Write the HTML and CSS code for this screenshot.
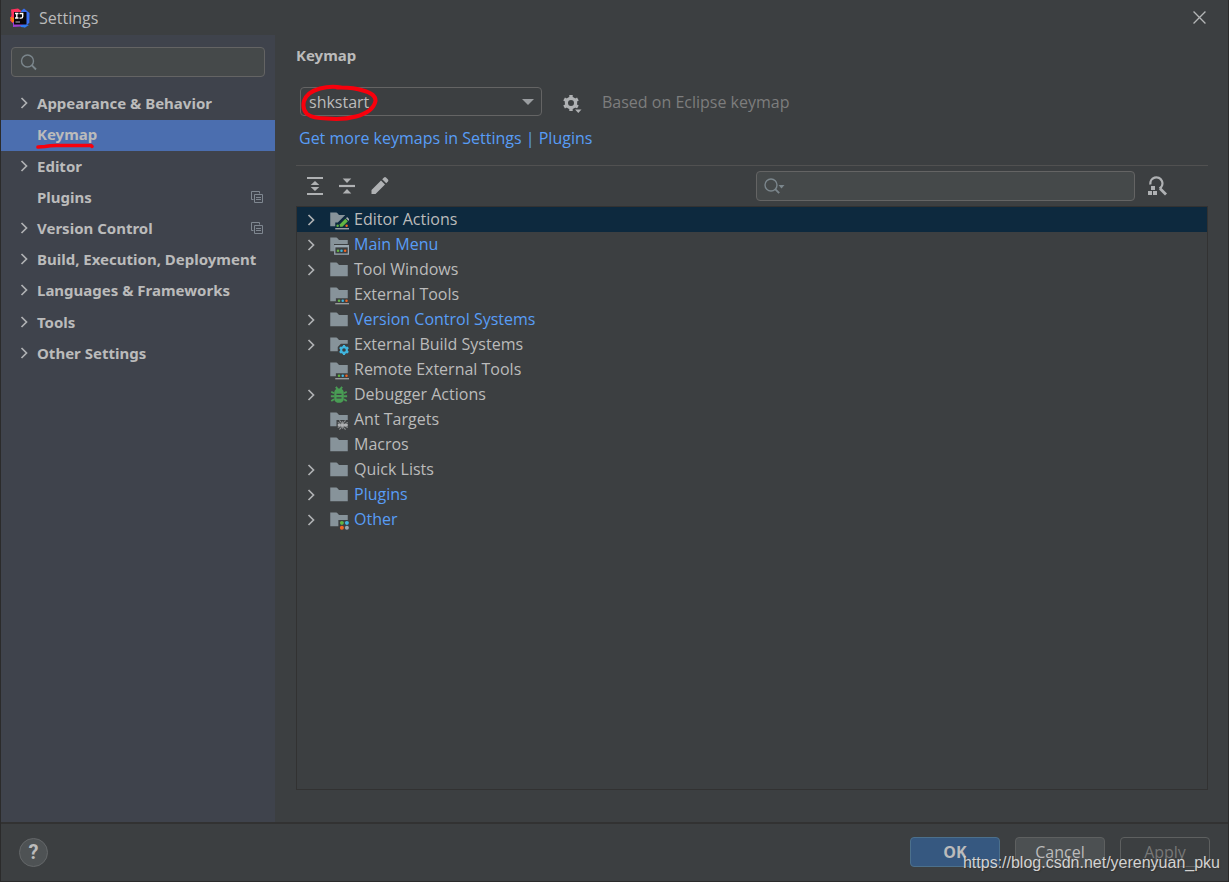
FILE: index.html
```html
<!DOCTYPE html>
<html lang="en">
<head>
<meta charset="utf-8">
<title>Settings</title>
<link rel="stylesheet" href="styles.css">
</head>
<body>
<svg class="defs" aria-hidden="true">
  <symbol id="chev" viewBox="0 0 12 12"><path d="M3.500 1l5 5-5 5" fill="none" stroke="#afb1b3" stroke-width="1.700"/></symbol>
  <symbol id="copy" viewBox="0 0 12 12"><path d="M2.500 8.500H.5V.5h8v2" fill="none" stroke="#7f8790"/><path d="M3.500 3.500h8v8h-8z" fill="none" stroke="#7f8790"/><path d="M5 6.500h5M5 8.500h5" stroke="#7f8790"/></symbol>
  <symbol id="folder" viewBox="0 0 16 16"><path d="M1 13h14V4H8L6.600 2.300A1 1 0 0 0 5.900 2H1z" fill="#87939a"/></symbol>
  <symbol id="f-edit" viewBox="0 0 16 16"><path d="M1 13h4v-3h2l6-6H8L6.600 2.300A1 1 0 0 0 5.900 2H1z" fill="#87939a"/><path d="M8.700 11.400l4.400-4.400 2 2-4.400 4.400H8.700z" fill="#62b543"/><path d="M13.600 6.500l.9-.9 2 2-.9.900z" fill="#afb1b3"/><circle cx="6.900" cy="12.600" r="1" fill="#62b543"/><circle cx="14.100" cy="12.600" r="1" fill="#f26522"/><path d="M5 15h11" stroke="#afb1b3"/></symbol>
  <symbol id="f-menu" viewBox="0 0 16 16"><path d="M1 13h3V7.200h11V4H8L6.600 2.300A1 1 0 0 0 5.900 2H1z" fill="#87939a"/><path d="M4.600 8.400h10.900v6.900H4.600z" fill="none" stroke="#9aa7b0"/><path d="M4.600 9.200h10.900" stroke="#9aa7b0" stroke-width="1.400"/><circle cx="7.200" cy="12.500" r="1" fill="#62b543"/><circle cx="10" cy="12.500" r="1" fill="#40b6e0"/><circle cx="12.900" cy="12.500" r="1" fill="#f26522"/></symbol>
  <symbol id="f-tools" viewBox="0 0 16 16"><path d="M1 13h4.500v-2.500H15V4H8L6.600 2.300A1 1 0 0 0 5.900 2H1z" fill="#87939a"/><circle cx="8" cy="12.500" r="1" fill="#62b543"/><circle cx="11" cy="12.500" r="1" fill="#40b6e0"/><circle cx="14" cy="12.500" r="1" fill="#f26522"/><path d="M5 15h11" stroke="#afb1b3" stroke-width=".9"/></symbol>
  <symbol id="f-build" viewBox="0 0 16 16"><path d="M1 13h6V9.500L9.500 7H15V4H8L6.600 2.300A1 1 0 0 0 5.900 2H1z" fill="#87939a"/><circle cx="12" cy="12" r="2.300" fill="none" stroke="#40b6e0" stroke-width="1.700"/><path d="M12 8v1.500M12 14.500V16M8.540 10l1.300.75M14.160 13.250l1.300.75M15.460 10l-1.300.75M9.840 13.250l-1.300.75" stroke="#40b6e0" stroke-width="1.700"/></symbol>
  <symbol id="f-ant" viewBox="0 0 16 16"><path d="M1 13h5V8h9V4H8L6.600 2.300A1 1 0 0 0 5.900 2H1z" fill="#87939a"/><path d="M7 12h2.500M11.500 12H15" stroke="#afb1b3" stroke-width="2.200"/><circle cx="10.700" cy="12" r="1.300" fill="#afb1b3"/><path d="M8 8.700h1l1.300 2.500M13.500 8.700h-1l-1.300 2.500M8 15.300h1l1.300-2.500M13.500 15.300h-1l-1.300-2.500M10.700 9v6M7 10l2 .8M15 10l-2 .8M7 14l2-.8M15 14l-2-.8" fill="none" stroke="#afb1b3" stroke-width=".6"/></symbol>
  <symbol id="f-other" viewBox="0 0 16 16"><path d="M1 13h6.500V8H15V4H8L6.600 2.300A1 1 0 0 0 5.900 2H1z" fill="#87939a"/><circle cx="10.300" cy="10.300" r="1.600" fill="#62b543"/><circle cx="14.300" cy="10.300" r="1.600" fill="#40b6e0"/><circle cx="10.300" cy="14.200" r="1.600" fill="#f26522"/><circle cx="14.300" cy="14.200" r="1.600" fill="#9aa7b0"/></symbol>
  <symbol id="bug" viewBox="0 0 16 16"><path d="M4.200 5.500A3.900 3.400 0 0 1 11.800 5.500V11.500A3.900 3.500 0 0 1 4.200 11.500z" fill="#499c54"/><path d="M5.500 1.500l1.500 2M10.500 1.500L9 3.500M4 6.600L1.800 5.400M12 6.600l2.200-1.200M1.500 9h3M11.500 9h3M4 11.400l-2.200 1.400M12 11.400l2.200 1.400" stroke="#499c54" stroke-width="1.500"/><path d="M6 7.500h4M6 10.300h4" stroke="#3c3f41" stroke-width="1"/></symbol>
</svg>

<div class="window">
  <header class="titlebar">
    <svg class="logo" viewBox="0 0 20 20" aria-hidden="true">
      <path d="M1 1.500L8 .5l4 3-8 13-4-4L1.500 7z" fill="#fe315d"/>
      <path d="M0 9l5 1v5l-3-1z" fill="#f97a12"/>
      <path d="M11 3l3-2.500L19.500 5l-.2 9.500L15 19.500 9 17z" fill="#3b6ff2"/>
      <path d="M3 14l13-1-5 5.500-8 .5z" fill="#9b3fd0"/>
      <path d="M10 17h9l-4 2.500-4-.5z" fill="#2d7bf4"/>
      <path d="M4 4h12.500v12.500H4z" fill="#08060c"/>
      <path d="M5 5.500h3.500M6.800 5.500v4.500M5 10h3.500M9.500 5.500h3.200v3q0 1.600-1.700 1.600H9.500" fill="none" stroke="#fff" stroke-width="1.400"/>
      <path d="M5.500 14h4.500" stroke="#bbb"/>
    </svg>
    <span class="title">Settings</span>
    <button class="close" type="button" aria-label="Close"><svg viewBox="0 0 12 12"><path d="M.5.5l11 11M11.500.5l-11 11" stroke="#b4b6b7" stroke-width="1.200"/></svg></button>
  </header>

  <div class="body">
    <aside class="sidebar">
      <label class="search">
        <svg class="lens" viewBox="0 0 20 20" aria-hidden="true"><circle cx="8.500" cy="9" r="6" fill="none" stroke="#7b868c" stroke-width="1.400"/><path d="M12.700 13.200l4.300 4.300" stroke="#7b868c" stroke-width="1.900"/></svg>
        <input type="text" aria-label="Search settings">
      </label>
      <nav class="nav">
        <a href="#"><svg class="chev"><use href="#chev"/></svg><span>Appearance &amp; Behavior</span></a>
        <a href="#" class="current" aria-current="page"><i class="chev"></i><span class="marked">Keymap<svg class="underline" viewBox="0 0 60 6" aria-hidden="true"><path d="M2 4l7-.5Q14 2.500 20 2.500H55l1 .8" fill="none" stroke="#f8000c" stroke-width="3.600" stroke-linecap="round"/></svg></span></a>
        <a href="#"><svg class="chev"><use href="#chev"/></svg><span>Editor</span></a>
        <a href="#"><i class="chev"></i><span>Plugins</span><svg class="copy"><use href="#copy"/></svg></a>
        <a href="#"><svg class="chev"><use href="#chev"/></svg><span>Version Control</span><svg class="copy"><use href="#copy"/></svg></a>
        <a href="#"><svg class="chev"><use href="#chev"/></svg><span>Build, Execution, Deployment</span></a>
        <a href="#"><svg class="chev"><use href="#chev"/></svg><span>Languages &amp; Frameworks</span></a>
        <a href="#"><svg class="chev"><use href="#chev"/></svg><span>Tools</span></a>
        <a href="#"><svg class="chev"><use href="#chev"/></svg><span>Other Settings</span></a>
      </nav>
    </aside>

    <main class="main">
      <h1>Keymap</h1>
      <div class="scheme">
        <div class="combo">
          <select aria-label="Keymap scheme"><option>shkstart</option></select>
          <svg class="arrow" viewBox="0 0 12 6" aria-hidden="true"><path d="M0 0h12L6 6z" fill="#9a9da0"/></svg>
          <svg class="ring" viewBox="0 0 78 38" aria-hidden="true"><path d="M41 3.500Q31 1.500 20 4.500 7 8 4 17 2 25 7 30 13 34.500 27 34.500 43 36 56 32.500 73 28 75.500 17 76 10 63 6.500 53 3 37 3.500" fill="none" stroke="#f8000c" stroke-width="4" stroke-linecap="round"/></svg>
        </div>
        <button class="icon gear" type="button" aria-label="Scheme actions"><svg viewBox="0 0 20 20"><circle cx="9" cy="9" r="4.600" fill="none" stroke="#afb1b3" stroke-width="3.200"/><path d="M9 1v3M9 14v3M2.100 5l2.600 1.500M13.300 11.500l2.600 1.500M15.900 5l-2.600 1.500M4.700 11.500L2.100 13" stroke="#afb1b3" stroke-width="3.400"/><path d="M11.500 14.500h9l-4.300 6z" fill="#3c3f41"/><path d="M13 15.500h6.500l-3.200 3.500z" fill="#afb1b3"/></svg></button>
        <span class="based">Based on Eclipse keymap</span>
      </div>
      <a class="more" href="#">Get more keymaps in Settings | Plugins</a>

      <div class="toolbar">
        <button class="icon" type="button" aria-label="Expand all"><svg viewBox="0 0 20 20"><path d="M2 2h16M2 18h16" stroke="#afb1b3" stroke-width="2.200"/><path d="M10 5l4.300 4H5.700zM10 15l4.300-4H5.700z" fill="#afb1b3"/></svg></button>
        <button class="icon" type="button" aria-label="Collapse all"><svg viewBox="0 0 20 20"><path d="M2 10h16" stroke="#afb1b3" stroke-width="2.200"/><path d="M10 7l4.300-4.500H5.700zM10 13l4.300 4.500H5.700z" fill="#afb1b3"/></svg></button>
        <button class="icon" type="button" aria-label="Edit shortcut"><svg viewBox="0 0 20 20"><path d="M2.500 18v-4L12 4.500l4 4L6.500 18zM13.200 3.300L15 1.500q1-.8 2 0l2 2q.8 1 0 2l-1.800 1.800z" fill="#afb1b3"/></svg></button>
        <label class="search filter">
          <svg class="lens wide" viewBox="0 0 24 20" aria-hidden="true"><circle cx="7" cy="9" r="6" fill="none" stroke="#7b868c" stroke-width="1.400"/><path d="M11.200 13.200l4 4" stroke="#7b868c" stroke-width="1.900"/><path d="M14.500 9h6l-3 3.500z" fill="#7b868c"/></svg>
          <input type="text" aria-label="Filter actions">
        </label>
        <button class="icon" type="button" aria-label="Find by shortcut"><svg viewBox="0 0 20 20"><path d="M3.500 8.500A6 6 0 1 1 12.500 12.500" fill="none" stroke="#afb1b3" stroke-width="2.300"/><path d="M13 12.500l6 6" stroke="#afb1b3" stroke-width="2.800"/><path d="M4 10h4v4H4zM1 15h4v4H1zM6 15h4v4H6z" fill="#afb1b3"/></svg></button>
      </div>

      <ul class="tree">
        <li class="selected"><svg class="chev"><use href="#chev"/></svg><svg class="kind"><use href="#f-edit"/></svg><span>Editor Actions</span></li>
        <li class="changed"><svg class="chev"><use href="#chev"/></svg><svg class="kind"><use href="#f-menu"/></svg><span>Main Menu</span></li>
        <li><svg class="chev"><use href="#chev"/></svg><svg class="kind"><use href="#folder"/></svg><span>Tool Windows</span></li>
        <li><i class="chev"></i><svg class="kind"><use href="#f-tools"/></svg><span>External Tools</span></li>
        <li class="changed"><svg class="chev"><use href="#chev"/></svg><svg class="kind"><use href="#folder"/></svg><span>Version Control Systems</span></li>
        <li><svg class="chev"><use href="#chev"/></svg><svg class="kind"><use href="#f-build"/></svg><span>External Build Systems</span></li>
        <li><i class="chev"></i><svg class="kind"><use href="#f-tools"/></svg><span>Remote External Tools</span></li>
        <li><svg class="chev"><use href="#chev"/></svg><svg class="kind"><use href="#bug"/></svg><span>Debugger Actions</span></li>
        <li><i class="chev"></i><svg class="kind"><use href="#f-ant"/></svg><span>Ant Targets</span></li>
        <li><i class="chev"></i><svg class="kind"><use href="#folder"/></svg><span>Macros</span></li>
        <li><svg class="chev"><use href="#chev"/></svg><svg class="kind"><use href="#folder"/></svg><span>Quick Lists</span></li>
        <li class="changed"><svg class="chev"><use href="#chev"/></svg><svg class="kind"><use href="#folder"/></svg><span>Plugins</span></li>
        <li class="changed"><svg class="chev"><use href="#chev"/></svg><svg class="kind"><use href="#f-other"/></svg><span>Other</span></li>
      </ul>
    </main>
  </div>

  <footer class="footer">
    <button class="help" type="button" aria-label="Help">?</button>
    <div class="actions">
      <button class="btn primary" type="button">OK</button>
      <button class="btn" type="button">Cancel</button>
      <button class="btn off" type="button" disabled>Apply</button>
    </div>
    <span class="watermark">https://blog.csdn.net/yerenyuan_pku</span>
  </footer>
</div>
</body>
</html>
```
FILE: styles.css
```css
* { box-sizing: border-box; }

body {
  margin: 0;
  background: #3c3f41;
  color: #bbbbbb;
  font: 16px/24px "Open Sans", "Noto Sans", sans-serif;
}

.defs { display: none; }
svg { display: block; flex: none; }
button, input, select { font: inherit; color: inherit; }
a { color: inherit; text-decoration: none; }

.window {
  display: flex;
  flex-direction: column;
  min-height: 100vh;
  border: solid #2b2b2b;
  border-width: 0 1px 1px;
}

.titlebar {
  display: flex;
  align-items: center;
  gap: 9px;
  height: 35px;
  padding: 0 22px 0 9px;
}
.logo { width: 20px; height: 20px; }
.title { flex: 1; }
.close { padding: 0; border: 0; background: none; }
.close svg { width: 13px; height: 13px; }

.body { display: flex; flex: 1; }

.sidebar {
  width: 274px;
  padding-top: 12px;
  background: #3f434c;
}
.search {
  display: flex;
  align-items: center;
  height: 30px;
  padding: 0 7px;
  border: 1px solid #646464;
  border-radius: 4px;
  background: #45494a;
}
.search input {
  flex: 1;
  min-width: 0;
  border: 0;
  outline: 0;
  background: none;
}
.sidebar .search { margin: 0 10px 12px; }
.lens { width: 20px; height: 20px; }
.lens.wide { width: 24px; }

.nav {
  display: grid;
  min-height: 281px;
  font: bold 15px/24px "Noto Sans", "Open Sans", sans-serif;
}
.nav a {
  display: flex;
  align-items: center;
  padding: 0 12px 3px 17px;
}
.nav .current { background: #4b6eaf; }
.nav .chev { margin-right: 7px; }
.chev { width: 12px; height: 12px; }
.copy { width: 12px; height: 12px; margin-left: auto; }
.marked { position: relative; }
.underline {
  position: absolute;
  left: -1px;
  bottom: -3px;
  width: 60px;
  height: 6px;
}

.main {
  display: flex;
  flex: 1;
  flex-direction: column;
  padding: 8px 20px 32px 21px;
}
h1 { margin: 0; font: bold 15px/24px "Noto Sans", "Open Sans", sans-serif; }

.scheme {
  display: flex;
  align-items: center;
  margin: 20px 0 10px 4px;
}
.combo { position: relative; width: 242px; }
.combo select {
  display: block;
  width: 100%;
  height: 29px;
  padding: 0 8px;
  appearance: none;
  border: 1px solid #646464;
  border-radius: 4px;
  background: #3c3f41;
}
.arrow {
  position: absolute;
  top: 12px;
  right: 8px;
  width: 12px;
  height: 6px;
}
.ring {
  position: absolute;
  top: -3px;
  left: 0;
  width: 78px;
  height: 38px;
}
.icon { padding: 0; border: 0; background: none; }
.icon svg { width: 20px; height: 20px; }
.gear { margin: 4px 20px 0; }
.based { color: #7d7d7d; }
.more {
  align-self: flex-start;
  margin: 0 0 15px 3px;
  color: #589df6;
}

.toolbar {
  display: flex;
  align-items: center;
  gap: 12px;
  height: 41px;
  padding: 0 41px 0 9px;
  border-top: 1px solid #515151;
}
.filter { width: 379px; margin-left: auto; }

.tree {
  flex: 1;
  margin: 0;
  padding: 0;
  border: 1px solid #323232;
  list-style: none;
}
.tree li {
  display: flex;
  align-items: center;
  height: 25px;
  padding-left: 8px;
}
.tree span { padding-bottom: 2px; line-height: 22px; }
.tree .selected { background: #0d293e; }
.tree .changed { color: #589df6; }
.kind { width: 20px; height: 20px; margin: 0 5px 0 12px; overflow: visible; }

.footer {
  position: relative;
  display: flex;
  align-items: center;
  justify-content: space-between;
  height: 59px;
  padding: 0 18px 1px;
  border-top: 2px solid #323232;
}
.help {
  width: 29px;
  height: 29px;
  padding: 0;
  border: 1px solid #646769;
  border-radius: 50%;
  background: #4e5254;
  font: bold 20px/27px Roboto, sans-serif;
}
.actions { display: flex; gap: 15px; }
.btn {
  width: 90px;
  height: 30px;
  padding: 0;
  border: 1px solid #5e6060;
  border-radius: 4px;
  background: #4c5052;
}
.primary { border-color: #4c708c; background: #365880; font-weight: bold; }
.off { background: none; color: #777777; }
.watermark {
  position: absolute;
  right: 8px;
  bottom: 6px;
  color: #d2d2d2;
  font: 16px/24px "Liberation Sans", Arial, sans-serif;
  text-shadow: 1px 1px 1px #333333;
}
```
